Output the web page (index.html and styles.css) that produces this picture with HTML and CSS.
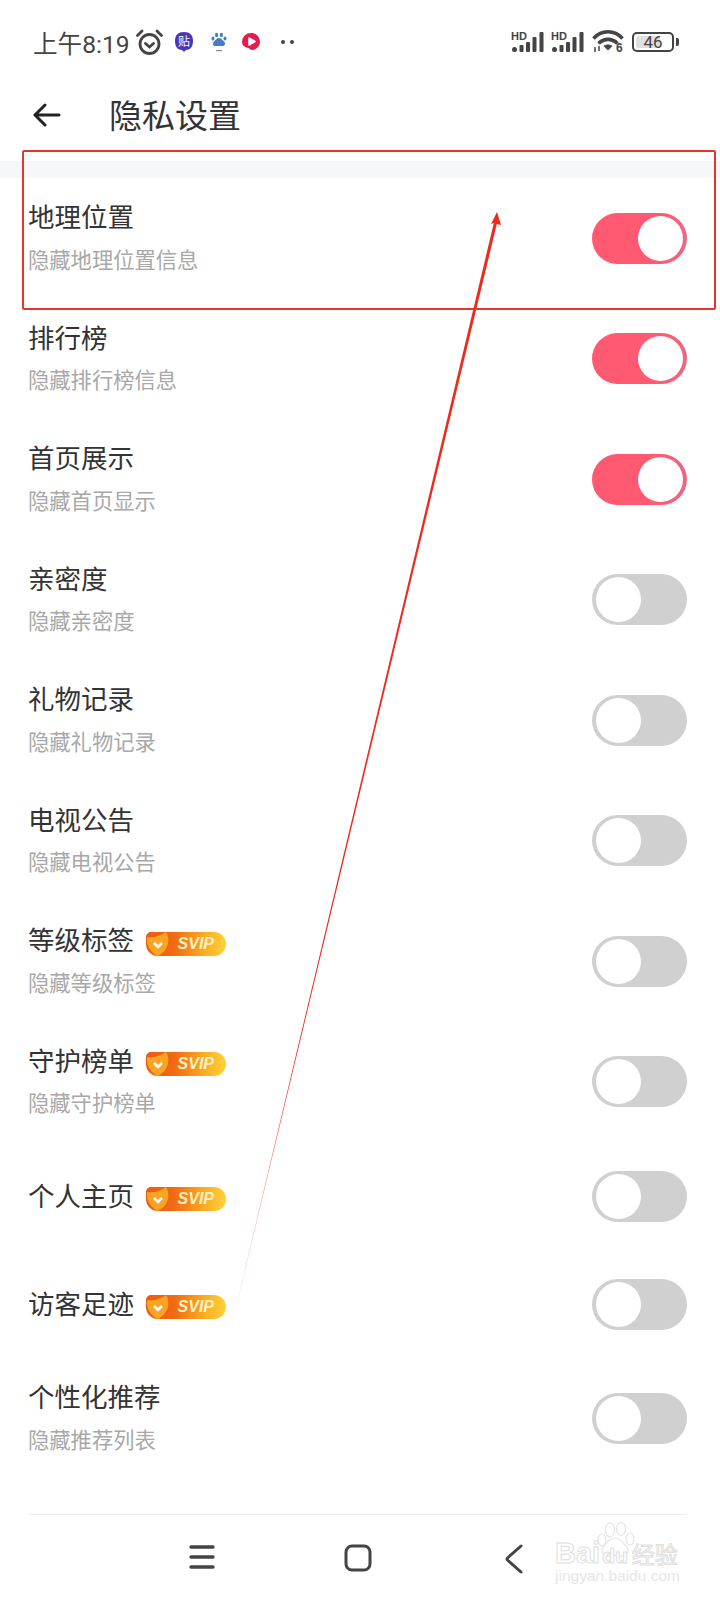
FILE: index.html
```html
<!DOCTYPE html>
<html lang="zh-CN">
  <head>
    <meta charset="UTF-8" />
    <title>隐私设置</title>
    <link rel="stylesheet" href="styles.css">
  </head>
  <body>
    <div class="page">
      <div class="status-bar">
        <span class="time">上午8:19</span>
        <svg class="alarm" width="27" height="26" viewBox="0 0 27 26" fill="none" stroke="#444" stroke-width="2.800" stroke-linecap="round">
          <circle cx="13.500" cy="15" r="9.500"/>
          <path d="M9.500 14.500l4 3.500 4-3.500"/>
          <path d="M1.500 6.500L6 2M25.500 6.500L21 2"/>
        </svg>
        <svg class="notif-tie" width="20" height="22" viewBox="0 0 20 22">
          <path d="M10 1c6 0 9 3 9 9s-3 9-7 9l-2 2-2-2c-4 0-7-3-7-9s3-9 9-9z" fill="#4a36b8"/>
          <text x="10" y="14.500" text-anchor="middle" class="tie-text">贴</text>
        </svg>
        <svg class="notif-paw" width="16" height="20" viewBox="0 0 16 20" fill="#4a7cc4">
          <ellipse cx="5.600" cy="3" rx="1.600" ry="2.200"/>
          <ellipse cx="10.400" cy="3" rx="1.600" ry="2.200"/>
          <ellipse cx="2" cy="6.600" rx="1.500" ry="2"/>
          <ellipse cx="14" cy="6.600" rx="1.500" ry="2"/>
          <path d="M8 6c2.500 0 3 2 5 3.500 2 2 1 4.500-1.500 4.500h-7C2 14 1 11.500 3 9.500 5 8 5.500 6 8 6z"/>
          <rect x="5" y="18" width="6" height="1.200" fill="#888"/>
        </svg>
        <svg class="notif-play" width="20" height="18" viewBox="0 0 20 18">
          <path d="M10 0a9 8.500 0 0 1 9 8.500c0 5-4 8.500-8 8.500-1.500 0-2-1-3.500-2C4 14.500 1 12.500 1 8.500A9 8.500 0 0 1 10 0z" fill="#e8194f"/>
          <path d="M8 5l6 3.500-6 3.500z" fill="#fff" stroke="#fff" stroke-width="1.500" stroke-linejoin="round"/>
        </svg>
        <span class="dots"><i></i><i></i></span>
        <span class="status-right">
          <svg width="34" height="22" viewBox="0 0 34 22" fill="#444">
            <text x="0" y="9" class="hd-text">HD</text>
            <circle cx="3.500" cy="18.500" r="2.500"/>
            <rect x="8.500" y="14" width="4" height="7" rx="1"/>
            <rect x="15" y="11" width="4" height="10" rx="1"/>
            <rect x="21.500" y="6" width="4" height="15" rx="1"/>
            <rect x="28.500" y="1" width="4" height="20" rx="1"/>
          </svg>
          <svg width="34" height="22" viewBox="0 0 34 22" fill="#444">
            <text x="0" y="9" class="hd-text">HD</text>
            <circle cx="3.500" cy="18.500" r="2.500"/>
            <rect x="8.500" y="14" width="4" height="7" rx="1"/>
            <rect x="15" y="11" width="4" height="10" rx="1"/>
            <rect x="21.500" y="6" width="4" height="15" rx="1"/>
            <rect x="28.500" y="1" width="4" height="20" rx="1"/>
          </svg>
          <svg class="wifi" width="32" height="28" viewBox="0 0 32 28" fill="none" stroke="#444" stroke-width="3.600">
            <path d="M1.500 10.500C9.500 1.500 22.500 1.500 30.500 10.500"/>
            <path d="M6.500 15.500C12 10 20 10 25.500 15.500"/>
            <path d="M16 22.500l-4.500-4.500c2.500-2 6.500-2 9 0z" fill="#444" stroke="none"/>
            <path d="M3 19v5M7 18v5" stroke-width="1.500"/>
            <text x="24" y="23.500" class="wifi-text">6</text>
          </svg>
          <span class="battery"><span class="battery-fill"></span><span class="battery-num">46</span></span>
          <span class="battery-tip"></span>
        </span>
      </div>

      <div class="header">
        <svg width="28" height="24" viewBox="0 0 28 24" fill="none" stroke="#222" stroke-width="3" stroke-linecap="round" stroke-linejoin="round">
          <path d="M26 12H2M12 2L2 12l10 10"/>
        </svg>
        <h1>隐私设置</h1>
      </div>

      <div class="band"></div>

      <div class="list">
        <div class="row">
          <div class="row-text">
            <div class="row-title">地理位置</div>
            <div class="row-sub">隐藏地理位置信息</div>
          </div>
          <span class="toggle on"></span>
        </div>
        <div class="row">
          <div class="row-text">
            <div class="row-title">排行榜</div>
            <div class="row-sub">隐藏排行榜信息</div>
          </div>
          <span class="toggle on"></span>
        </div>
        <div class="row">
          <div class="row-text">
            <div class="row-title">首页展示</div>
            <div class="row-sub">隐藏首页显示</div>
          </div>
          <span class="toggle on"></span>
        </div>
        <div class="row">
          <div class="row-text">
            <div class="row-title">亲密度</div>
            <div class="row-sub">隐藏亲密度</div>
          </div>
          <span class="toggle"></span>
        </div>
        <div class="row">
          <div class="row-text">
            <div class="row-title">礼物记录</div>
            <div class="row-sub">隐藏礼物记录</div>
          </div>
          <span class="toggle"></span>
        </div>
        <div class="row">
          <div class="row-text">
            <div class="row-title">电视公告</div>
            <div class="row-sub">隐藏电视公告</div>
          </div>
          <span class="toggle"></span>
        </div>
        <div class="row">
          <div class="row-text">
            <div class="row-title">等级标签<span class="svip"><svg class="svip-shield" width="26" height="24" viewBox="0 0 26 24"><path d="M1 5C8 6 15 4 20 0c5 8 2 19-8 24C5 21 0 14 1 5z" fill="#f9a422"/><path d="M8 11l4 4 4-4" fill="none" stroke="#fff" stroke-width="2.500"/></svg><span class="svip-label">SVIP</span></span></div>
            <div class="row-sub">隐藏等级标签</div>
          </div>
          <span class="toggle"></span>
        </div>
        <div class="row">
          <div class="row-text">
            <div class="row-title">守护榜单<span class="svip"><svg class="svip-shield" width="26" height="24" viewBox="0 0 26 24"><path d="M1 5C8 6 15 4 20 0c5 8 2 19-8 24C5 21 0 14 1 5z" fill="#f9a422"/><path d="M8 11l4 4 4-4" fill="none" stroke="#fff" stroke-width="2.500"/></svg><span class="svip-label">SVIP</span></span></div>
            <div class="row-sub">隐藏守护榜单</div>
          </div>
          <span class="toggle"></span>
        </div>
        <div class="row single">
          <div class="row-text">
            <div class="row-title">个人主页<span class="svip"><svg class="svip-shield" width="26" height="24" viewBox="0 0 26 24"><path d="M1 5C8 6 15 4 20 0c5 8 2 19-8 24C5 21 0 14 1 5z" fill="#f9a422"/><path d="M8 11l4 4 4-4" fill="none" stroke="#fff" stroke-width="2.500"/></svg><span class="svip-label">SVIP</span></span></div>
          </div>
          <span class="toggle"></span>
        </div>
        <div class="row single">
          <div class="row-text">
            <div class="row-title">访客足迹<span class="svip"><svg class="svip-shield" width="26" height="24" viewBox="0 0 26 24"><path d="M1 5C8 6 15 4 20 0c5 8 2 19-8 24C5 21 0 14 1 5z" fill="#f9a422"/><path d="M8 11l4 4 4-4" fill="none" stroke="#fff" stroke-width="2.500"/></svg><span class="svip-label">SVIP</span></span></div>
          </div>
          <span class="toggle"></span>
        </div>
        <div class="row">
          <div class="row-text">
            <div class="row-title">个性化推荐</div>
            <div class="row-sub">隐藏推荐列表</div>
          </div>
          <span class="toggle"></span>
        </div>
      </div>

      <div class="nav">
        <svg width="26" height="26" viewBox="0 0 26 26" stroke="#444" stroke-width="3.400" stroke-linecap="round">
          <path d="M2 3h22M2 13h22M2 23h22"/>
        </svg>
        <svg width="28" height="28" viewBox="0 0 28 28" fill="none" stroke="#444" stroke-width="3">
          <rect x="2" y="2" width="24" height="24" rx="6"/>
        </svg>
        <svg width="18" height="30" viewBox="0 0 18 30" fill="none" stroke="#444" stroke-width="3" stroke-linecap="round" stroke-linejoin="round">
          <path d="M16 2L2.500 14c-.7.7-.7 1.300 0 2L16 28"/>
        </svg>
      </div>

      <!-- annotation drawn on top of the screenshot -->
      <div class="mark-box"></div>
      <svg class="mark-arrow" width="720" height="1600" viewBox="0 0 720 1600">
        <defs>
          <linearGradient id="arrowFade" x1="0" y1="0" x2="0" y2="1">
            <stop offset="0" stop-color="#ec2a1e"/>
            <stop offset="0.75" stop-color="#ec2a1e"/>
            <stop offset="1" stop-color="#ec2a1e" stop-opacity="0.25"/>
          </linearGradient>
        </defs>
        <path d="M497 212L501 225 496.800 224 227 1345 493.800 223 491 224z" fill="url(#arrowFade)"/>
      </svg>

      <div class="watermark">
        <svg class="watermark-paw" width="42" height="36" viewBox="0 0 42 36" fill="#fff" stroke="#e4e4e4" stroke-width="1.200">
          <ellipse cx="7" cy="18" rx="4" ry="6"/>
          <ellipse cx="15" cy="8" rx="4.500" ry="7"/>
          <ellipse cx="26" cy="7" rx="4.500" ry="6.500"/>
          <ellipse cx="35" cy="17" rx="4" ry="6"/>
          <path d="M20 16c6 0 8 5 12 9 3 5-1 10-7 9-4-1-6-1-10 0-6 1-10-4-7-9 4-4 6-9 12-9z"/>
        </svg>
        <div class="watermark-main">Bai<span class="watermark-du">du</span><span class="watermark-cn">经验</span></div>
        <div class="watermark-url">jingyan.baidu.com</div>
      </div>
    </div>
  </body>
</html>
```

FILE: styles.css
```css
body {
  margin: 0;
  background: #fff;
  font-family: "Noto Sans CJK SC", "Noto Sans", sans-serif;
}
.page {
  position: relative;
  width: 720px;
  height: 1600px;
  overflow: hidden;
}

/* status bar */
.status-bar {
  height: 84px;
  display: flex;
  align-items: center;
  padding-left: 33px;
  color: #444;
}
.time {
  font-size: 24.6px;
  width: 103px;
  white-space: nowrap;
  font-family: Roboto, "Noto Sans CJK SC", sans-serif;
}
.notif-tie {
  margin-left: 11px;
}
.notif-paw {
  margin-left: 17px;
}
.notif-play {
  margin-left: 14px;
}
.tie-text {
  font-size: 12px;
  fill: #fff;
}
.dots {
  display: flex;
  gap: 5px;
  margin-left: 20px;
}
.dots i {
  width: 4px;
  height: 4px;
  border-radius: 50%;
  background: #444;
}
.status-right {
  display: flex;
  align-items: center;
  margin-left: auto;
  padding-right: 41px;
  gap: 6px;
}
.hd-text {
  font-family: "Liberation Sans", sans-serif;
  font-size: 11px;
  font-weight: 700;
}
.wifi-text {
  font-family: "Liberation Sans", sans-serif;
  font-size: 12px;
  font-weight: 700;
  fill: #444;
  stroke: none;
}
.wifi {
  margin: 0 2px 0 1px;
}
.battery {
  position: relative;
  box-sizing: border-box;
  width: 42px;
  height: 20px;
  border: 2px solid #444;
  border-radius: 5px;
  overflow: hidden;
}
.battery-fill {
  position: absolute;
  left: 2px;
  top: 2px;
  bottom: 2px;
  width: 24px;
  background: #e0e0e0;
  border-radius: 2px;
}
.battery-num {
  position: absolute;
  left: 0;
  right: 0;
  top: 0;
  bottom: 0;
  text-align: center;
  font: 17px/16px Roboto, sans-serif;
  color: #444;
}
.battery-tip {
  width: 3px;
  height: 8px;
  margin-left: -4px;
  background: #444;
  border-radius: 0 2px 2px 0;
}

/* header */
.header {
  height: 62px;
  display: flex;
  align-items: center;
  padding-left: 33px;
}
.header h1 {
  margin: -2px 0 0 48px;
  font-size: 33px;
  font-weight: 400;
  color: #333;
}
.band {
  height: 17px;
  margin-top: 15px;
  background: #f6f7f9;
}

/* rows */
.row {
  height: 120.5px;
  display: flex;
  align-items: center;
  justify-content: space-between;
  padding: 0 33px 0 28px;
}
.row.single {
  height: 108px;
}
.row-text {
  padding-bottom: 4px;
}
.row-title {
  display: flex;
  align-items: center;
  height: 36px;
  font-size: 26.5px;
  color: #333;
}
.row-sub {
  margin-top: 9px;
  font-size: 21.3px;
  line-height: 32px;
  color: #a8a8a8;
}
.toggle {
  position: relative;
  box-sizing: border-box;
  width: 95px;
  height: 51px;
  border-radius: 26px;
  background: #d0d0d0;
}
.toggle::after {
  content: "";
  position: absolute;
  left: 4px;
  top: 3px;
  width: 45px;
  height: 45px;
  border-radius: 50%;
  background: #fff;
}
.toggle.on {
  background: linear-gradient(90deg, #ff5a72 80%, #e56c84);
}
.toggle.on::after {
  left: 46px;
}

/* svip badge */
.svip {
  position: relative;
  display: flex;
  align-items: center;
  justify-content: flex-end;
  width: 80px;
  height: 24px;
  margin: 10px 0 0 12px;
  padding-right: 12px;
  box-sizing: border-box;
  border-radius: 5px 12px 12px 12px;
  background: linear-gradient(90deg, #ee5a10 0%, #f06a12 35%, #fbb024 75%, #ffd23a 100%);
}
.svip-shield {
  position: absolute;
  left: 0;
  top: 0;
}
.svip-label {
  font: italic 700 16px/24px "Liberation Sans", sans-serif;
  color: #fff0c4;
}

/* bottom nav */
.nav {
  margin-top: 35px;
  height: 87px;
  border-top: 1px solid #ececec;
  margin-left: 29px;
  margin-right: 34px;
  display: grid;
  grid-template-columns: repeat(3, 156px);
  justify-content: center;
  justify-items: center;
  align-items: start;
  padding-top: 29px;
  box-sizing: border-box;
}

/* annotation */
.mark-box {
  position: absolute;
  left: 22px;
  top: 150px;
  box-sizing: border-box;
  width: 694px;
  height: 160px;
  border: 2px solid #e8352c;
  border-radius: 2px;
}
.mark-arrow {
  position: absolute;
  left: 0;
  top: 0;
}

/* watermark */
.watermark {
  position: absolute;
  left: 555px;
  top: 1522px;
  width: 130px;
  height: 62px;
}
.watermark-paw {
  position: absolute;
  left: 40px;
  top: 0;
}
.watermark-main {
  position: absolute;
  left: 0;
  top: 14px;
  font: 700 29px/34px "Liberation Sans", "Noto Sans CJK SC", sans-serif;
  color: #fff;
  -webkit-text-stroke: 1px #e0e0e0;
  white-space: nowrap;
}
.watermark-du {
  position: relative;
  margin-left: 2px;
  font-size: 21px;
}
.watermark-cn {
  margin-left: 4px;
  font-size: 23px;
  font-weight: 400;
}
.watermark-url {
  position: absolute;
  left: 0;
  top: 44px;
  font: 15.5px/20px "Liberation Sans", sans-serif;
  color: #e6e6e6;
  white-space: nowrap;
}
```
